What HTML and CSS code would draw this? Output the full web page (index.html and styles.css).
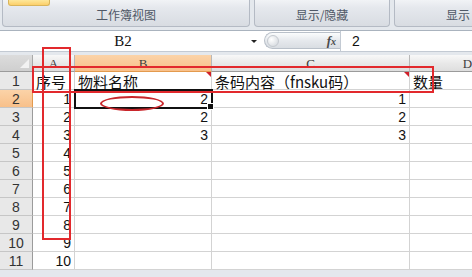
FILE: index.html
```html
<!DOCTYPE html>
<html lang="zh-CN">
<head>
    <meta charset="UTF-8">
    <meta name="viewport" content="width=device-width, initial-scale=1.0">
    <title>工作表</title>
    <link rel="stylesheet" href="styles.css">
</head>
<body>
    <!-- ribbon bottoms -->
    <div class="ribbon">
        <div class="group g1">
            <div class="yellow-btn"></div>
            <div class="group-label">工作簿视图</div>
        </div>
        <div class="group g2">
            <div class="group-label">显示/隐藏</div>
        </div>
        <div class="group g3">
            <div class="group-label">显示</div>
        </div>
    </div>

    <!-- formula bar -->
    <div class="formula">
        <div class="namebox">
            <span class="name-text">B2</span>
            <span class="drop"></span>
        </div>
        <div class="pill">
            <span class="knob"></span>
            <span class="fx">f<small>x</small></span>
        </div>
        <div class="input">2</div>
    </div>

    <!-- grid -->
    <div class="sheet">
        <div class="corner"></div>
        <div class="colhead">A</div>
        <div class="colhead on">B</div>
        <div class="colhead">C</div>
        <div class="colhead">D</div>

        <div class="rowhead">1</div>
        <div class="cell txt">序号</div>
        <div class="cell txt note">物料名称</div>
        <div class="cell txt note">条码内容（fnsku码）</div>
        <div class="cell txt">数量</div>

        <div class="rowhead on">2</div>
        <div class="cell num">1</div>
        <div class="cell num sel">2</div>
        <div class="cell num">1</div>
        <div class="cell"></div>

        <div class="rowhead">3</div>
        <div class="cell num">2</div>
        <div class="cell num">2</div>
        <div class="cell num">2</div>
        <div class="cell"></div>

        <div class="rowhead">4</div>
        <div class="cell num">3</div>
        <div class="cell num">3</div>
        <div class="cell num">3</div>
        <div class="cell"></div>

        <div class="rowhead">5</div>
        <div class="cell num">4</div>
        <div class="cell"></div>
        <div class="cell"></div>
        <div class="cell"></div>

        <div class="rowhead">6</div>
        <div class="cell num">5</div>
        <div class="cell"></div>
        <div class="cell"></div>
        <div class="cell"></div>

        <div class="rowhead">7</div>
        <div class="cell num">6</div>
        <div class="cell"></div>
        <div class="cell"></div>
        <div class="cell"></div>

        <div class="rowhead">8</div>
        <div class="cell num">7</div>
        <div class="cell"></div>
        <div class="cell"></div>
        <div class="cell"></div>

        <div class="rowhead">9</div>
        <div class="cell num">8</div>
        <div class="cell"></div>
        <div class="cell"></div>
        <div class="cell"></div>

        <div class="rowhead">10</div>
        <div class="cell num">9</div>
        <div class="cell"></div>
        <div class="cell"></div>
        <div class="cell"></div>

        <div class="rowhead">11</div>
        <div class="cell num">10</div>
        <div class="cell"></div>
        <div class="cell"></div>
        <div class="cell"></div>
    </div>

    <!-- red hand-drawn marks on top -->
    <div class="mark mark-col"></div>
    <div class="mark mark-row"></div>
    <div class="mark mark-oval"></div>
</body>
</html>
```

FILE: styles.css
```css
body {
    width: 472px;
    height: 277px;
    margin: 0;
    overflow: hidden;
    position: relative;
    background: #e4e8ed;
    font-family: "Noto Sans CJK SC", sans-serif;
}

/* ribbon */
.ribbon {
    display: flex;
    gap: 4px;
    height: 27px;
    padding-left: 2px;
}
.group {
    box-sizing: border-box;
    display: flex;
    flex-direction: column;
    justify-content: flex-end;
    align-items: center;
    border: 1px solid #b4bac4;
    border-top: none;
    border-radius: 0 0 4px 4px;
    background: linear-gradient(#f1f3f6, #e5e8ed 30%, #d8dce2);
    flex-shrink: 0;
}
.g1 {
    width: 248px;
    justify-content: space-between;
}
.g2 {
    width: 136px;
}
.g3 {
    width: 150px;
}
.yellow-btn {
    align-self: flex-start;
    margin-left: 5px;
    width: 40px;
    height: 5px;
    border: 1px solid #d9b45a;
    border-top: none;
    border-radius: 0 0 3px 3px;
    background: linear-gradient(#fde79a, #fccf6a);
}
.group-label {
    font-size: 12px;
    line-height: 16px;
    padding-bottom: 3px;
    color: #4f5866;
    white-space: nowrap;
}
.g3 .group-label {
    align-self: flex-start;
    padding-left: 51px;
}

/* formula bar */
.formula {
    display: flex;
    height: 20px;
    margin: 3px 0 3px;
    background: #fff;
    border-top: 1px solid #aab3be;
    border-bottom: 1px solid #c3cad3;
}
.namebox {
    width: 262px;
    display: flex;
    align-items: center;
}
.name-text {
    width: 246px;
    text-align: center;
    font-family: "Liberation Serif", serif;
    font-size: 15px;
    color: #111;
}
.drop {
    width: 0;
    height: 0;
    margin-left: 5px;
    border-left: 3px solid transparent;
    border-right: 3px solid transparent;
    border-top: 3px solid #222;
}
.pill {
    box-sizing: border-box;
    width: 76px;
    height: 17px;
    margin: 1px 0 0 2px;
    display: flex;
    align-items: center;
    justify-content: space-between;
    border: 1px solid #b9c0c9;
    border-right: none;
    border-radius: 9px 0 0 9px;
    background: linear-gradient(#fbfcfd, #e6e9ed 50%, #d9dde2);
}
.knob {
    width: 10px;
    height: 10px;
    margin-left: 2px;
    border-radius: 50%;
    border: 1px solid #c4c9cf;
    background: radial-gradient(circle at 35% 35%, #ffffff, #cfd4da);
}
.fx {
    font-family: "Liberation Serif", serif;
    font-style: italic;
    font-weight: bold;
    font-size: 13px;
    color: #4a4a4a;
    padding-right: 4px;
}
.fx small {
    font-size: 10px;
}
.input {
    flex: 1;
    border-left: 1px solid #c3cad3;
    padding-left: 11px;
    font-family: "Liberation Sans", sans-serif;
    font-size: 14px;
    line-height: 20px;
    color: #111;
}

/* sheet */
.sheet {
    display: grid;
    grid-template-columns: 33px 42px 137px 198px 116px;
    grid-template-rows: 17px;
    grid-auto-rows: 18px;
    background: #fff;
}
.sheet > div {
    box-sizing: border-box;
    overflow: hidden;
    white-space: nowrap;
}
.corner {
    position: relative;
    background: linear-gradient(#dcdcdc, #cfcfcf);
    border-right: 1px solid #a9a9a9;
    border-bottom: 1px solid #9b9b9b;
}
.corner::after {
    content: "";
    position: absolute;
    right: 3px;
    bottom: 3px;
    border-left: 9px solid transparent;
    border-bottom: 9px solid #f2f2f2;
}
.colhead {
    background: linear-gradient(#f8f8f8, #e9e9e9 50%, #dedede);
    border-right: 1px solid #b8b8b8;
    border-bottom: 1px solid #9b9b9b;
    text-align: center;
    font-family: "Liberation Serif", serif;
    font-size: 13px;
    line-height: 17px;
    color: #3c3c3c;
}
.colhead.on {
    background: linear-gradient(#fbd3a8, #f8c08a);
    border-bottom-color: #e39a4e;
}
.rowhead {
    background: #e8e8e8;
    border-right: 1px solid #9b9b9b;
    border-bottom: 1px solid #c6c6c6;
    text-align: center;
    font-family: "Liberation Sans", sans-serif;
    font-size: 14px;
    line-height: 18px;
    color: #333;
}
.rowhead.on {
    background: linear-gradient(#fbd3a8, #f8c08a);
    border-right-color: #e39a4e;
}
.cell {
    position: relative;
    border-right: 1px solid #d3d3d3;
    border-bottom: 1px solid #d3d3d3;
    color: #111;
}
.sheet > .txt {
    overflow: visible;
    padding: 1px 0 0 3px;
    font-size: 15px;
    line-height: 17px;
}
.num {
    padding-right: 3px;
    text-align: right;
    font-family: "Liberation Sans", sans-serif;
    font-size: 14px;
    line-height: 18px;
}
.note::after {
    content: "";
    position: absolute;
    top: 0;
    right: 0;
    border-left: 5px solid transparent;
    border-top: 5px solid #d0202a;
}
.sheet > .sel {
    overflow: visible;
    z-index: 1;
    outline: 2px solid #111;
    outline-offset: -1px;
}
.sel::after {
    content: "";
    position: absolute;
    right: -3px;
    bottom: -3px;
    width: 5px;
    height: 5px;
    background: #111;
    border: 1px solid #fff;
}

/* red annotations */
.mark {
    position: absolute;
    box-sizing: border-box;
    border: 2px solid #e2292d;
    z-index: 5;
}
.mark-col {
    left: 42px;
    top: 47px;
    width: 29px;
    height: 193px;
}
.mark-row {
    left: 32px;
    top: 66px;
    width: 402px;
    height: 27px;
}
.mark-oval {
    left: 100px;
    top: 96px;
    width: 64px;
    height: 15px;
    border-radius: 50%;
    border-color: #c9262b;
}
```
